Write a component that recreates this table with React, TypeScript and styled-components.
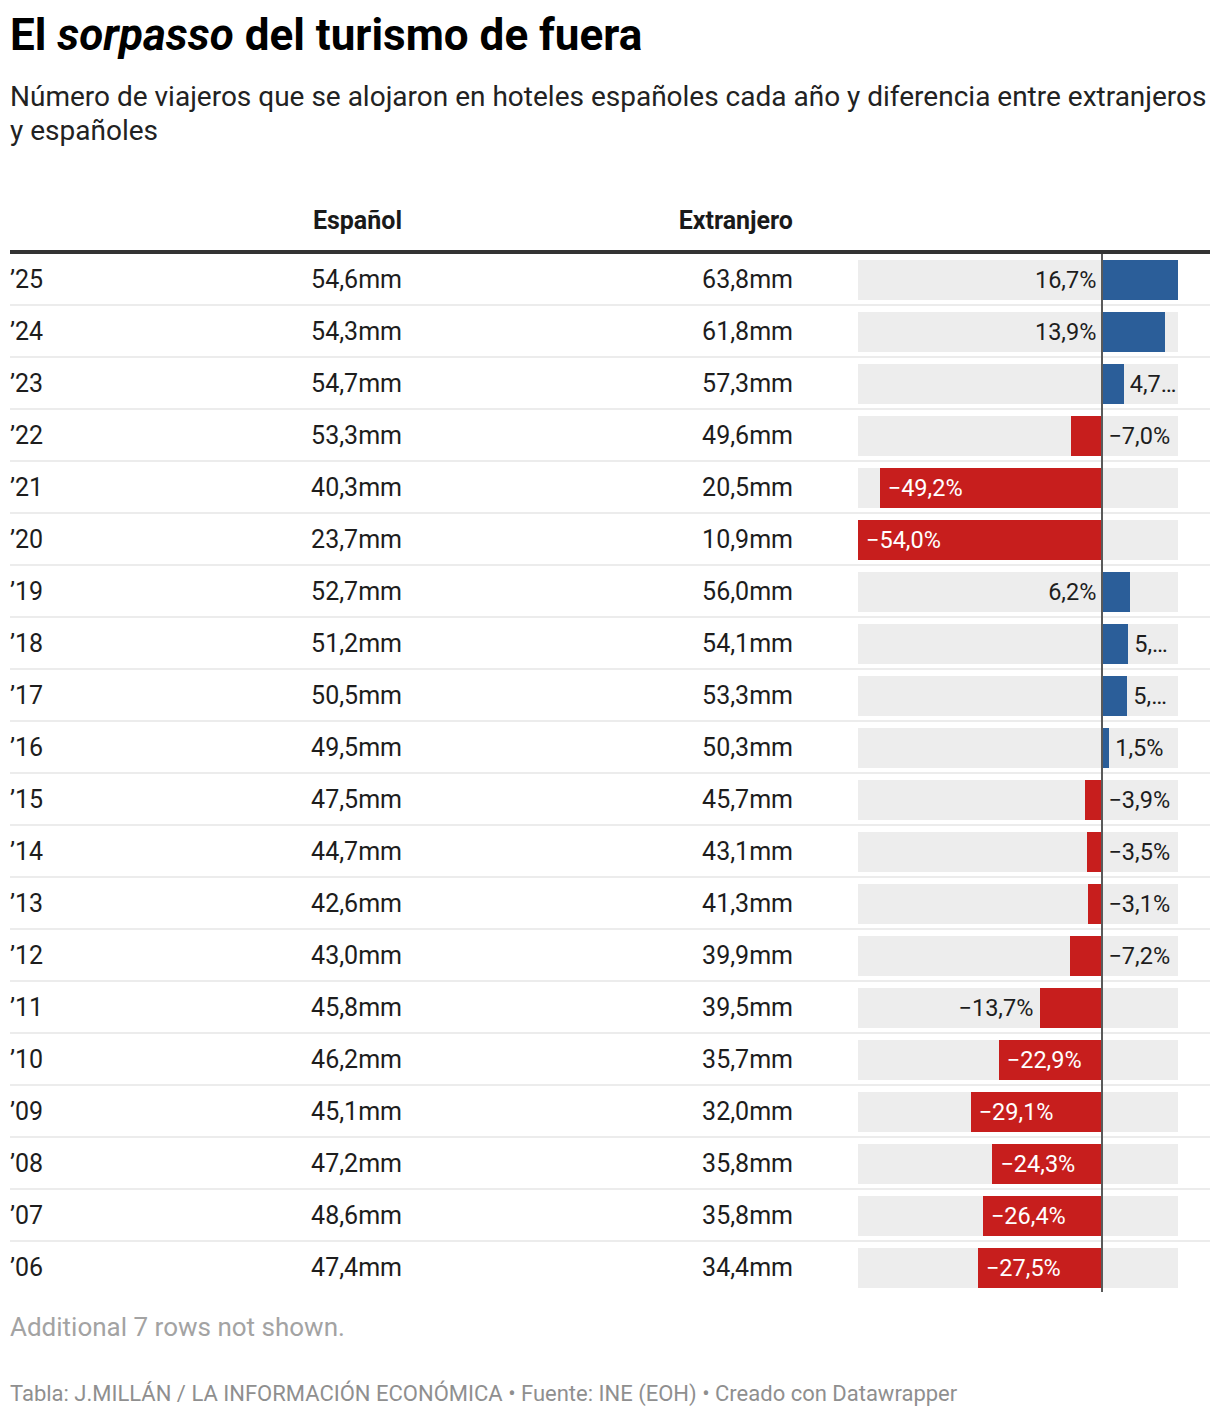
import styled, { createGlobalStyle } from 'styled-components'

type LabelPos = 'in' | 'before' | 'axisL' | 'axisR' | 'after'

interface Row {
  year: string
  es: string
  ex: string
  diff: number
  pos: LabelPos
}

const rows: Row[] = [
  { year: '25', es: '54,6mm', ex: '63,8mm', diff: 16.7, pos: 'axisL' },
  { year: '24', es: '54,3mm', ex: '61,8mm', diff: 13.9, pos: 'axisL' },
  { year: '23', es: '54,7mm', ex: '57,3mm', diff: 4.7, pos: 'after' },
  { year: '22', es: '53,3mm', ex: '49,6mm', diff: -7.0, pos: 'axisR' },
  { year: '21', es: '40,3mm', ex: '20,5mm', diff: -49.2, pos: 'in' },
  { year: '20', es: '23,7mm', ex: '10,9mm', diff: -54.0, pos: 'in' },
  { year: '19', es: '52,7mm', ex: '56,0mm', diff: 6.2, pos: 'axisL' },
  { year: '18', es: '51,2mm', ex: '54,1mm', diff: 5.7, pos: 'after' },
  { year: '17', es: '50,5mm', ex: '53,3mm', diff: 5.5, pos: 'after' },
  { year: '16', es: '49,5mm', ex: '50,3mm', diff: 1.5, pos: 'after' },
  { year: '15', es: '47,5mm', ex: '45,7mm', diff: -3.9, pos: 'axisR' },
  { year: '14', es: '44,7mm', ex: '43,1mm', diff: -3.5, pos: 'axisR' },
  { year: '13', es: '42,6mm', ex: '41,3mm', diff: -3.1, pos: 'axisR' },
  { year: '12', es: '43,0mm', ex: '39,9mm', diff: -7.2, pos: 'axisR' },
  { year: '11', es: '45,8mm', ex: '39,5mm', diff: -13.7, pos: 'before' },
  { year: '10', es: '46,2mm', ex: '35,7mm', diff: -22.9, pos: 'in' },
  { year: '09', es: '45,1mm', ex: '32,0mm', diff: -29.1, pos: 'in' },
  { year: '08', es: '47,2mm', ex: '35,8mm', diff: -24.3, pos: 'in' },
  { year: '07', es: '48,6mm', ex: '35,8mm', diff: -26.4, pos: 'in' },
  { year: '06', es: '47,4mm', ex: '34,4mm', diff: -27.5, pos: 'in' },
]

const TRACK = 320
const MIN = -54.0
const MAX = 16.7
const SCALE = TRACK / (MAX - MIN)
const ZERO = -MIN * SCALE

const fmt = (v: number) => (v < 0 ? '\u2212' : '') + Math.abs(v).toFixed(1).replace('.', ',') + '%'

const GlobalStyle = createGlobalStyle`
  body {
    margin: 0;
    background: #fff;
    font-family: Roboto, "Liberation Sans", sans-serif;
    color: #1d1d1d;
  }
`

const Page = styled.div`
  width: 1200px;
  padding: 10px 10px 0;
`

const Title = styled.h1`
  margin: 0;
  font-size: 44px;
  line-height: 50px;
  font-weight: 700;
  color: #000;
  em {
    font-style: italic;
  }
`

const Subtitle = styled.p`
  margin: 20px 0 0;
  font-size: 28px;
  line-height: 34px;
  color: #222;
`

const Table = styled.div`
  margin-top: 42px;
`

const Grid = styled.div<{ $last?: boolean }>`
  display: grid;
  grid-template-columns: 200px 192px 391px 417px;
  align-items: center;
  height: 50px;
  border-bottom: ${(p) => (p.$last ? 'none' : '2px solid #ececec')};
`

const Head = styled(Grid)`
  height: 60px;
  border-bottom: 4px solid #333;
  font-weight: 700;
`

const Cell = styled.div<{ $right?: boolean }>`
  font-size: 25px;
  text-align: ${(p) => (p.$right ? 'right' : 'left')};
  white-space: nowrap;
`

const HeadCell = styled(Cell)`
  color: #1a1a1a;
`

const BarCell = styled.div`
  align-self: stretch;
  padding: 6px 32px 4px 65px;
`

const Track = styled.div`
  position: relative;
  width: ${TRACK}px;
  height: 40px;
  background: #ededed;
`

const Bar = styled.div<{ $neg: boolean }>`
  position: absolute;
  top: 0;
  bottom: 0;
  background: ${(p) => (p.$neg ? '#c71e1d' : '#2b5e99')};
`

const Axis = styled.div<{ $last?: boolean }>`
  position: absolute;
  left: ${ZERO - 1}px;
  width: 2px;
  top: -6px;
  bottom: ${(p) => (p.$last ? '-4px' : '-6px')};
  background: #5a5a5a;
`

const Label = styled.div<{ $white?: boolean }>`
  position: absolute;
  top: 0;
  height: 40px;
  line-height: 40px;
  font-size: 23.5px;
  white-space: nowrap;
  overflow: hidden;
  text-overflow: ellipsis;
  color: ${(p) => (p.$white ? '#fff' : '#1d1d1d')};
`

const Note = styled.p`
  margin: 20px 0 0;
  font-size: 26px;
  line-height: 30px;
  color: #a3a3a3;
`

const Footer = styled.p`
  margin: 39px 0 0;
  font-size: 22px;
  line-height: 26px;
  color: #8f8f8f;
`

function DiffBar({ row, last }: { row: Row; last: boolean }) {
  const w = Math.abs(row.diff) * SCALE
  const neg = row.diff < 0
  const left = neg ? ZERO - w : ZERO
  const text = fmt(row.diff)

  let label
  if (row.pos === 'in') {
    label = <Label $white style={{ left: left + 8 }}>{text}</Label>
  } else if (row.pos === 'before') {
    label = <Label style={{ right: TRACK - left + 7 }}>{text}</Label>
  } else if (row.pos === 'axisL') {
    label = <Label style={{ right: TRACK - ZERO + 6 }}>{text}</Label>
  } else if (row.pos === 'axisR') {
    label = <Label style={{ left: ZERO + 6 }}>{text}</Label>
  } else {
    const start = left + w + 6
    label = <Label style={{ left: start, width: TRACK - start - 1 }}>{text}</Label>
  }

  return (
    <Track>
      <Bar $neg={neg} style={{ left, width: w }} />
      {label}
      <Axis $last={last} />
    </Track>
  )
}

export default function App() {
  return (
    <Page>
      <GlobalStyle />
      <Title>
        El <em>sorpasso</em> del turismo de fuera
      </Title>
      <Subtitle>
        Número de viajeros que se alojaron en hoteles españoles cada año y diferencia entre extranjeros y españoles
      </Subtitle>
      <Table>
        <Head>
          <HeadCell />
          <HeadCell $right>Español</HeadCell>
          <HeadCell $right>Extranjero</HeadCell>
          <HeadCell />
        </Head>
        {rows.map((r, i) => (
          <Grid key={r.year} $last={i === rows.length - 1}>
            <Cell>{'\u2019' + r.year}</Cell>
            <Cell $right>{r.es}</Cell>
            <Cell $right>{r.ex}</Cell>
            <BarCell>
              <DiffBar row={r} last={i === rows.length - 1} />
            </BarCell>
          </Grid>
        ))}
      </Table>
      <Note>Additional 7 rows not shown.</Note>
      <Footer>Tabla: J.MILLÁN / LA INFORMACIÓN ECONÓMICA • Fuente: INE (EOH) • Creado con Datawrapper</Footer>
    </Page>
  )
}
